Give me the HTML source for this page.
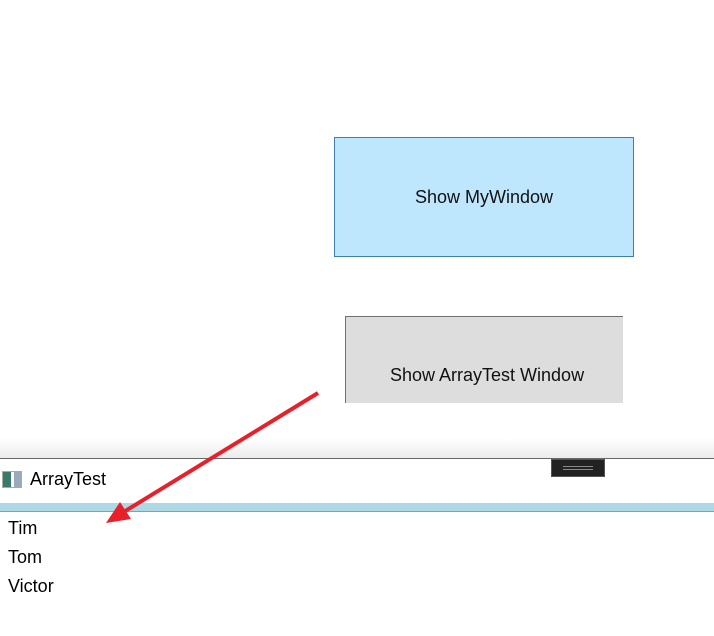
<!DOCTYPE html>
<html><head><style>
body{margin:0;width:714px;height:636px;position:relative;background:#fff;font-family:"Liberation Sans",sans-serif;overflow:hidden}
.a{position:absolute}
</style></head><body>
<div class="a" style="left:0;top:438px;width:714px;height:20px;background:linear-gradient(#fff,#ececec)"></div>
<div class="a" style="left:334px;top:137px;width:298px;height:118px;background:#bee6fd;border:1px solid #3c7fb1;display:flex;align-items:center;justify-content:center;font-size:18px;color:#111">Show MyWindow</div>
<div class="a" style="left:345px;top:316px;width:277px;height:86px;background:#dddddd;border-left:1px solid #707070;border-top:1px solid #707070"></div>
<div class="a" style="left:390px;top:365px;font-size:18px;color:#111">Show ArrayTest Window</div>
<div class="a" style="left:0;top:458px;width:714px;height:1px;background:#6a6a6a"></div>
<div class="a" style="left:551px;top:459px;width:54px;height:18px;background:#222;border:1px solid #555;box-sizing:border-box"></div>
<div class="a" style="left:563px;top:466px;width:30px;height:1px;background:#888"></div>
<div class="a" style="left:563px;top:469px;width:30px;height:1px;background:#888"></div>
<div class="a" style="left:2px;top:471px;width:20px;height:17px;border:1px solid #aaa;box-sizing:border-box;background:linear-gradient(90deg,#3a7a6a 0 45%,#fff 45% 60%,#9ab 60%)"></div>
<div class="a" style="left:30px;top:469px;font-size:18px;color:#000">ArrayTest</div>
<div class="a" style="left:0;top:503px;width:714px;height:8px;background:#add8e6;border-bottom:1px solid #999"></div>
<div class="a" style="left:8px;top:514px;font-size:18px;line-height:29px;color:#000">Tim<br>Tom<br>Victor</div>
<svg class="a" style="left:0;top:0" width="714" height="636"><line x1="318" y1="393" x2="122" y2="513" stroke="#e8202a" stroke-width="4"/><polygon points="106,523 120,502 131,519" fill="#e8202a"/></svg>
</body></html>
